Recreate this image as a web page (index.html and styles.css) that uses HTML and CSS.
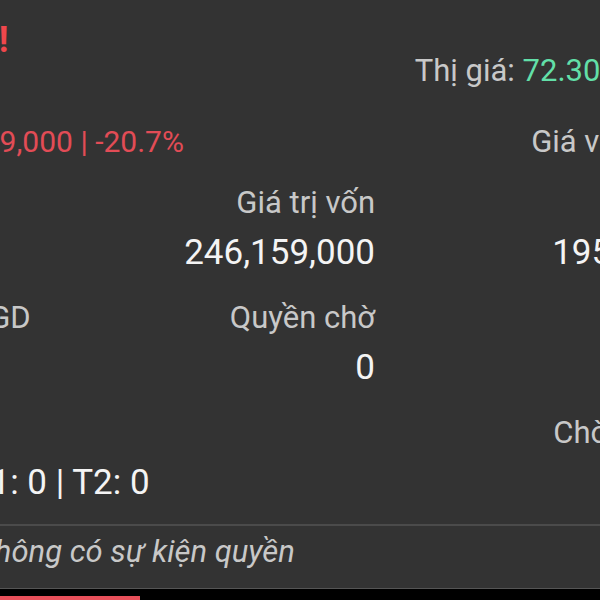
FILE: index.html
```html
<!DOCTYPE html>
<html>
<head>
	<meta charset="utf-8">
	<title>Danh mục - Chi tiết mã</title>
	<link rel="stylesheet" href="styles.css">
</head>
<body>
	<div class="card">
		<div class="head">
			<div class="title">Đang lỗ!</div>
			<div class="quote">Thị giá: <span class="up">72.30</span><span class="muted">(-20.70%)</span></div>
		</div>
		<div class="sub">
			<div class="pnl">Lỗ: -50,949,000 | -20.7%</div>
			<div class="cost">Giá vốn: 91.17</div>
		</div>
		<div class="stats">
			<div class="cell">
				<div class="label">Số lượng</div>
				<div class="value">2,700</div>
			</div>
			<div class="cell right">
				<div class="label">Giá trị vốn</div>
				<div class="value">246,159,000</div>
			</div>
			<div class="cell right">
				<div class="label">Giá trị TT</div>
				<div class="value">195,210,000</div>
			</div>

			<div class="cell">
				<div class="label">SL được GD</div>
				<div class="value">2,700</div>
			</div>
			<div class="cell right">
				<div class="label">Quyền chờ</div>
				<div class="value">0</div>
			</div>
			<div class="cell right">
				<div class="label">Cổ tức</div>
				<div class="value">0</div>
			</div>

			<div class="cell">
				<div class="label">Chờ về</div>
				<div class="value">T0: 0 | T1: 0 | T2: 0</div>
			</div>
			<div class="cell right"></div>
			<div class="cell right">
				<div class="label">Chờ khớp bán</div>
				<div class="value">0</div>
			</div>
		</div>
		<div class="divider"></div>
		<div class="note">Không có sự kiện quyền</div>
	</div>
	<div class="tabbar">
		<div class="progress"></div>
	</div>
</body>
</html>
```

FILE: styles.css
```css
html, body {
	height: 100%;
	overflow: hidden;
}

body {
	margin: 0;
	background-color: #333;
	font-family: Roboto, "Noto Sans", sans-serif;
	display: flex;
	flex-direction: column;
}

.card {
	width: 876px;
	margin-left: -133px;
	padding-top: 19px;
	padding-bottom: 18px;
	flex-shrink: 0;
}

.head {
	display: flex;
	justify-content: space-between;
	align-items: flex-start;
}

.title {
	padding-left: 9px;
	font-size: 36px;
	font-weight: 700;
	line-height: 43px;
	color: #f0474c;
	white-space: nowrap;
}

.quote,
.cost {
	padding-right: 16px;
	font-size: 31px;
	line-height: 36px;
	color: #c8c8c8;
	white-space: nowrap;
}

.quote {
	margin-top: 34px;
	padding-right: 12px;
}

.up {
	color: #62dfa8;
}

.muted {
	color: #c8c8c8;
}

.sub {
	margin-top: 35px;
	display: flex;
	justify-content: space-between;
}

.pnl {
	padding-left: 3px;
	font-size: 30px;
	line-height: 36px;
	color: #e24c56;
	white-space: nowrap;
}

.stats {
	margin-top: 25px;
	display: grid;
	grid-template-columns: 300px 208px 368px;
	row-gap: 27px;
}

.cell {
	display: flex;
	flex-direction: column;
	align-items: flex-start;
	min-height: 88px;
}

.cell.right {
	align-items: flex-end;
}

.label {
	font-size: 31px;
	line-height: 36px;
	color: #c8c8c8;
	white-space: nowrap;
}

.value {
	margin-top: 12px;
	font-size: 35px;
	line-height: 40px;
	color: #f4f4f4;
	white-space: nowrap;
}

.divider {
	margin-top: 21px;
	height: 2px;
	background-color: #4b4b4b;
}

.note {
	margin-top: 8px;
	padding-left: 109px;
	font-size: 31px;
	font-style: italic;
	line-height: 36px;
	color: #c8c8c8;
	white-space: nowrap;
}

.tabbar {
	flex: 1;
	border-top: 1px solid #555;
	background-color: #000;
	display: flex;
	align-items: flex-end;
}

.progress {
	width: 140px;
	height: 4px;
	background-color: #e8505a;
}
```
